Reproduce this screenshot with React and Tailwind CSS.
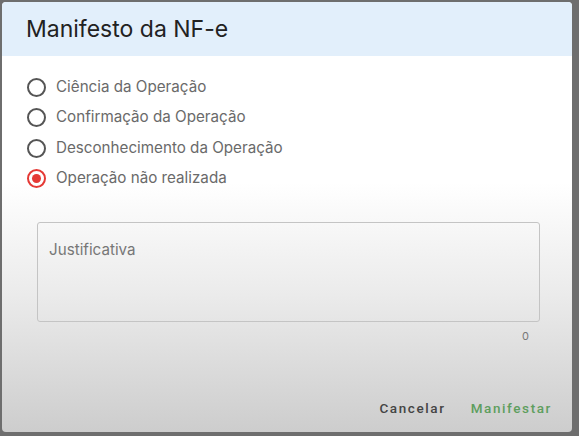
const options = [
  { label: "Ciência da Operação", checked: false },
  { label: "Confirmação da Operação", checked: false },
  { label: "Desconhecimento da Operação", checked: false },
  { label: "Operação não realizada", checked: true },
];

function Radio({ label, checked }) {
  return (
    <div className="flex items-center h-[30.5px]">
      <span
        className={
          "flex items-center justify-center w-[19px] h-[19px] rounded-full border-2 " +
          (checked ? "border-[#e53935]" : "border-[#555]")
        }
      >
        {checked && <span className="w-[9px] h-[9px] rounded-full bg-[#e53935]" />}
      </span>
      <span className="ml-[10px] text-[15.2px] text-[#6a6a6a]">{label}</span>
    </div>
  );
}

export default function App() {
  return (
    <div
      className="w-[579px] h-[436px] bg-[#6e6e6e] pt-[2px] pl-[2px] overflow-hidden"
      style={{ fontFamily: "Inter, 'Liberation Sans', sans-serif" }}
    >
      <div className="w-[570px] h-[430px] rounded-[4px] overflow-hidden flex flex-col bg-[linear-gradient(to_bottom,#ffffff_0%,#ffffff_42%,#ebebeb_68%,#cdcdcd_100%)]">
        <div className="h-[54px] shrink-0 bg-[#e2effb] flex items-center px-[24px]">
          <h2 className="text-[23px] text-[#222] font-normal">Manifesto da NF-e</h2>
        </div>

        <div className="pl-[25px] pt-[16px] flex flex-col">
          {options.map((o) => (
            <Radio key={o.label} label={o.label} checked={o.checked} />
          ))}
        </div>

        <div className="ml-[35px] mt-[28px] w-[503px]">
          <div className="h-[100px] rounded-[3px] border border-[#c4c4c4] px-[11px] pt-[14px]">
            <span className="text-[15.2px] text-[#777]">Justificativa</span>
          </div>
          <div className="flex justify-end pr-[11px] mt-[6px] text-[11px] text-[#777]">0</div>
        </div>

        <div className="flex-1" />

        <div
          className="flex justify-end items-center gap-[25px] pr-[20px] h-[36px] mb-[6px]"
          style={{ fontFamily: "Roboto, 'Liberation Sans', sans-serif" }}
        >
          <button className="text-[13.5px] font-medium tracking-[1.6px] text-[#444]">Cancelar</button>
          <button className="text-[13.5px] font-medium tracking-[1.6px] text-[#5e9e5e]">Manifestar</button>
        </div>
      </div>
    </div>
  );
}
